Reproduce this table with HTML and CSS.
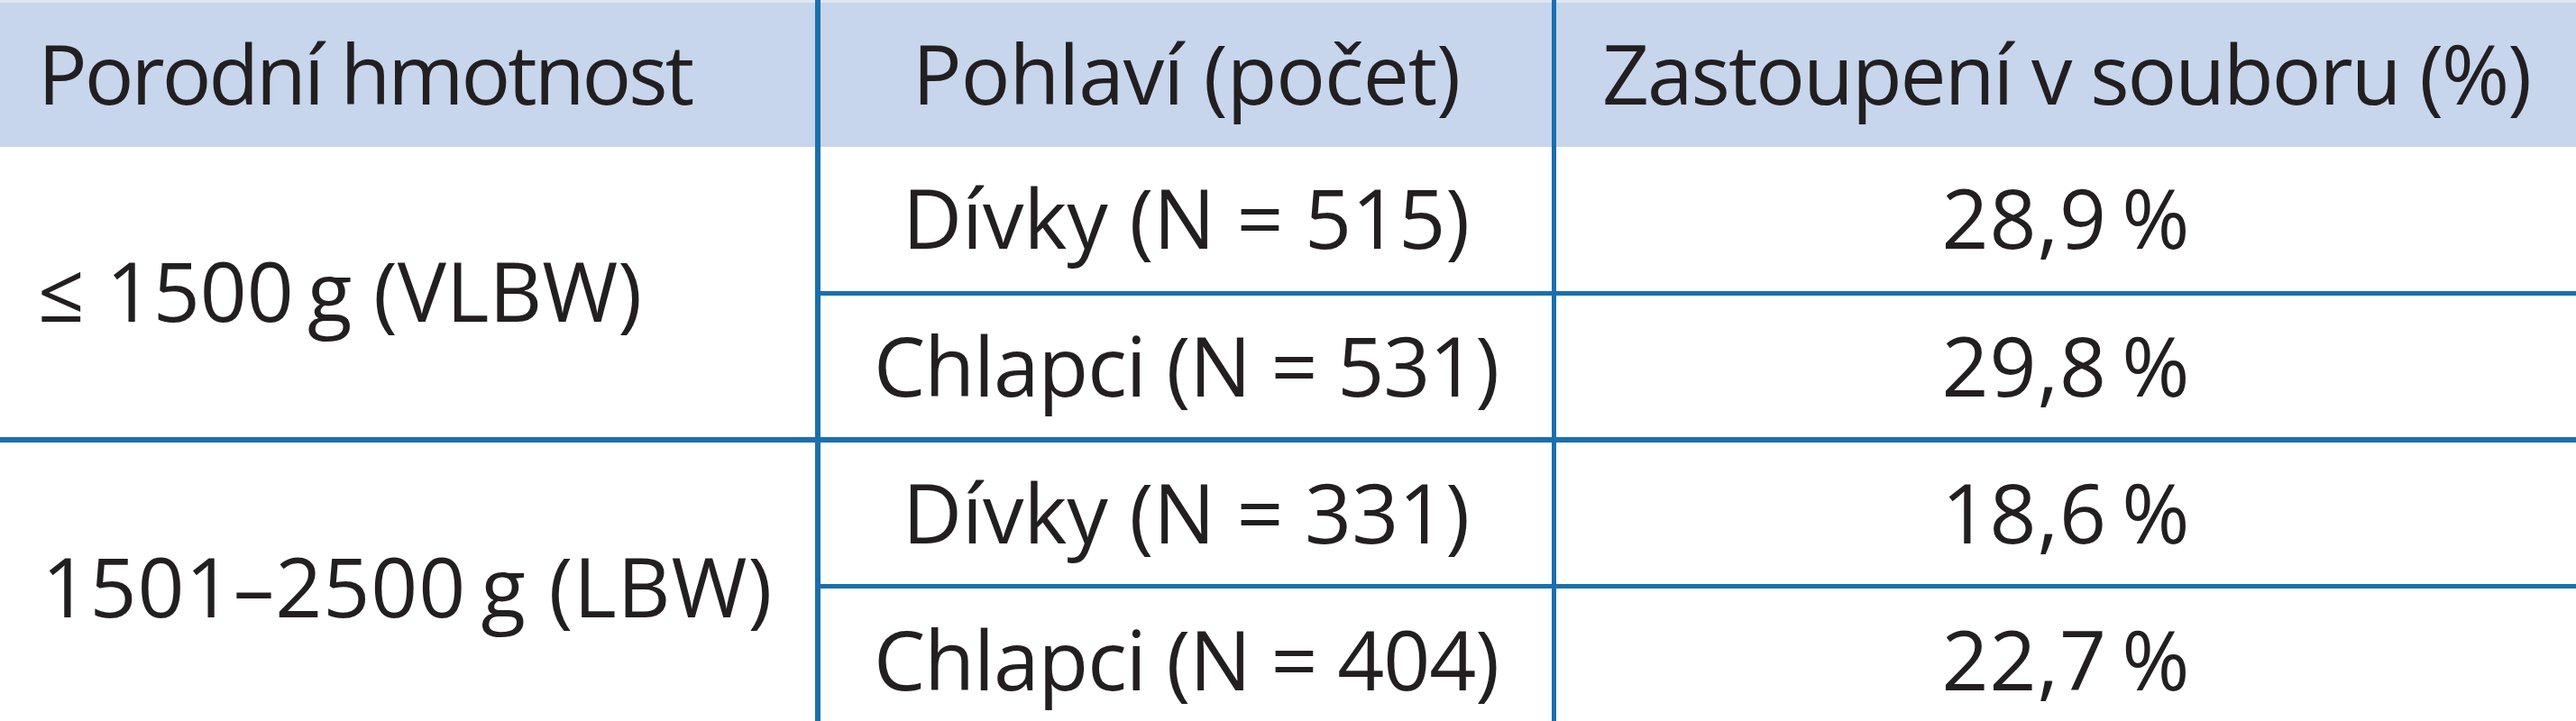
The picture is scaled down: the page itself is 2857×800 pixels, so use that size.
FILE: index.html
```html
<!DOCTYPE html>
<html lang="cs">
<head>
<meta charset="utf-8">
<title>Porodní hmotnost</title>
<link rel="stylesheet" href="styles.css">
</head>
<body>
<div class="table">
  <div class="cell head c1 left t-tight">Porodní hmotnost</div>
  <div class="cell head c2 t-snug">Pohlaví (počet)</div>
  <div class="cell head c3">Zastoupení v souboru (%)</div>

  <div class="cell c1 left span1">≤ 1500&#8201;g (VLBW)</div>
  <div class="cell c2 r1">Dívky (N = 515)</div>
  <div class="cell c3 r1 t-loose">28,9&#8201;%</div>
  <div class="cell c2 thin r2 t-snug">Chlapci (N = 531)</div>
  <div class="cell c3 thin r2 t-loose">29,8&#8201;%</div>

  <div class="cell c1 thick span2 t-loose">1501–2500&#8201;g (LBW)</div>
  <div class="cell c2 thick r3">Dívky (N = 331)</div>
  <div class="cell c3 thick r3 t-loose">18,6&#8201;%</div>
  <div class="cell c2 thin r4 t-snug">Chlapci (N = 404)</div>
  <div class="cell c3 thin r4 t-loose">22,7&#8201;%</div>
</div>
</body>
</html>
```
FILE: styles.css
```css
html, body {
  margin: 0;
  padding: 0;
  background: #ffffff;
  overflow: hidden;
}

.table {
  display: grid;
  grid-template-columns: 904px 817px 1136px;
  grid-template-rows: 163px 160px 162px 163px 165px;
  width: 2857px;
  font-family: "Open Sans", "Noto Sans", sans-serif;
  font-size: 91px;
  color: #231f20;
}

.cell {
  display: flex;
  align-items: center;
  justify-content: center;
  white-space: nowrap;
  box-sizing: border-box;
  padding-bottom: 4px;
  letter-spacing: 0;
}

.left {
  justify-content: flex-start;
  padding-left: 42px;
}

.head {
  background: #c7d6ec;
  box-shadow: inset 0 3px 0 #e0e7f1;
  padding-top: 3px;
  letter-spacing: -2px;
}

.t-tight { letter-spacing: -3px; }
.t-snug { letter-spacing: -1px; }
.t-loose { letter-spacing: 1px; }

.c1 { grid-column: 1; }
.c2 { grid-column: 2; border-left: 6px solid #1b6fae; }
.c3 { grid-column: 3; border-left: 5px solid #1b6fae; }

.span1 { grid-row: 2 / 4; }
.span2 { grid-row: 4 / 6; }
.r1 { grid-row: 2; }
.r2 { grid-row: 3; }
.r3 { grid-row: 4; }
.r4 { grid-row: 5; }

.thin {
  border-top: 5px solid #1b6fae;
}

.thick {
  border-top: 6px solid #1b6fae;
}
```
